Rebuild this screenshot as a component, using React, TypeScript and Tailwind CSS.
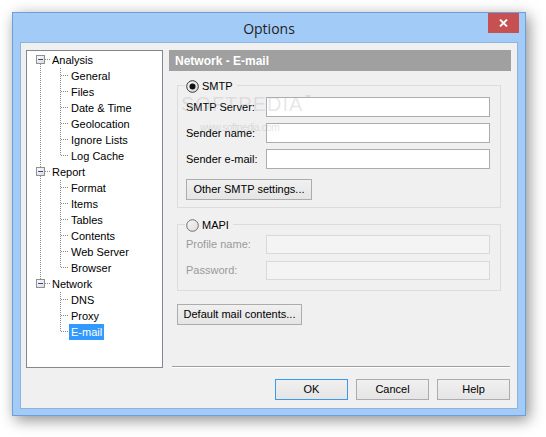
import React from "react";

type Branch = { label: string; children: string[] };

const TREE: Branch[] = [
  { label: "Analysis", children: ["General", "Files", "Date & Time", "Geolocation", "Ignore Lists", "Log Cache"] },
  { label: "Report", children: ["Format", "Items", "Tables", "Contents", "Web Server", "Browser"] },
  { label: "Network", children: ["DNS", "Proxy", "E-mail"] },
];

const DOT = { stroke: "#8a8a8a", strokeWidth: 1, strokeDasharray: "1 1", shapeRendering: "crispEdges" as const };

const ParentLines = ({ first, last }: { first: boolean; last: boolean }) => (
  <svg width="23" height="16" className="shrink-0">
    {!first && <line x1="13.5" y1="0" x2="13.5" y2="3" {...DOT} />}
    {!last && <line x1="13.5" y1="12" x2="13.5" y2="16" {...DOT} />}
    <defs>
      <linearGradient id="exp" x1="0" y1="0" x2="1" y2="1">
        <stop offset="0" stopColor="#ffffff" />
        <stop offset="1" stopColor="#d8d8d8" />
      </linearGradient>
    </defs>
    <rect x="9.5" y="3.5" width="8" height="8" fill="url(#exp)" stroke="#919191" shapeRendering="crispEdges" />
    <line x1="11" y1="7.5" x2="16" y2="7.5" stroke="#2a4f9c" strokeWidth="1" shapeRendering="crispEdges" />
    <line x1="18" y1="7.5" x2="23" y2="7.5" {...DOT} />
  </svg>
);

const ChildLines = ({ rootLine, last }: { rootLine: boolean; last: boolean }) => (
  <svg width="42" height="16" className="shrink-0">
    {rootLine && <line x1="13.5" y1="0" x2="13.5" y2="16" {...DOT} />}
    <line x1="33.5" y1="0" x2="33.5" y2={last ? 8 : 16} {...DOT} />
    <line x1="34" y1="7.5" x2="42" y2="7.5" {...DOT} />
  </svg>
);

const TreeView = () => (
  <div className="w-[137px] h-[318px] shrink-0 border border-[#828790] bg-white pt-[1px] text-[11px] leading-4 text-black">
    {TREE.map((b, bi) => {
      const lastBranch = bi === TREE.length - 1;
      return (
        <React.Fragment key={b.label}>
          <div className="flex h-4 items-center">
            <ParentLines first={bi === 0} last={lastBranch} />
            <span className="px-[2px]">{b.label}</span>
          </div>
          {b.children.map((c, ci) => {
            const selected = c === "E-mail";
            return (
              <div key={c} className="flex h-4 items-center">
                <ChildLines rootLine={!lastBranch} last={ci === b.children.length - 1} />
                <span className={selected ? "bg-[#3399ff] px-[2px] text-white" : "px-[2px]"}>{c}</span>
              </div>
            );
          })}
        </React.Fragment>
      );
    })}
  </div>
);

const Radio = ({ checked }: { checked?: boolean }) => (
  <svg width="13" height="13" className="shrink-0">
    <defs>
      <linearGradient id={checked ? "rOn" : "rOff"} x1="0" y1="0" x2="1" y2="1">
        <stop offset="0" stopColor="#f6f6f6" />
        <stop offset="1" stopColor="#dedede" />
      </linearGradient>
    </defs>
    <circle cx="6.5" cy="6.5" r="5.8" fill={`url(#${checked ? "rOn" : "rOff"})`} stroke={checked ? "#333333" : "#707070"} strokeWidth="1" />
    {checked && <circle cx="6.5" cy="6.5" r="3" fill="#111111" />}
  </svg>
);

const WinButton = ({ label, className = "", primary }: { label: string; className?: string; primary?: boolean }) => (
  <div
    className={
      "flex h-[21px] items-center justify-center border bg-linear-to-b from-[#f0f0f0] to-[#e5e5e5] text-[11px] text-black " +
      (primary ? "border-[#3c98e8] " : "border-[#acacac] ") +
      className
    }
  >
    {label}
  </div>
);

const Field = ({ label, disabled }: { label: string; disabled?: boolean }) => (
  <div className="flex items-center">
    <span className={"w-[88px] shrink-0 pl-[8px] text-[11px] " + (disabled ? "text-[#9a9a9a]" : "text-black")}>{label}</span>
    <div
      className={
        "w-[224px] " +
        (disabled ? "h-[19px] border border-[#d9d9d9] bg-[#f4f4f4]" : "h-[20px] border border-[#abadb3] bg-white")
      }
    />
  </div>
);

export default function App() {
  return (
    <div
      className="w-[546px] h-[437px] overflow-hidden bg-white pl-[12px] pt-[12px]"
      style={{ fontFamily: '"Liberation Sans", Arial, sans-serif' }}
    >
      <div className="relative flex h-[404px] w-[514px] flex-col border border-[#6f9fd8] bg-[#a3cbf7] shadow-[3px_4px_14px_rgba(0,0,0,0.45)]">
        <div
          className="flex h-[29px] shrink-0 items-center justify-center pt-[1px] text-[14px] text-[#1e1e1e]"
          style={{ fontFamily: '"Open Sans", "Noto Sans", sans-serif' }}
        >
          Options
        </div>
        <div className="absolute right-[6px] top-0 flex h-[20px] w-[31px] items-center justify-center bg-[#c75050]">
          <svg width="9" height="8" viewBox="0 0 9 8">
            <path d="M1 0.5 L8 7.5 M8 0.5 L1 7.5" stroke="#ffffff" strokeWidth="1.8" />
          </svg>
        </div>

        <div className="mx-[7px] flex h-[367px] shrink-0 border border-[#8eb3dd] bg-[#f0f0f0] pl-[5px] pt-[7px]">
          <TreeView />

          <div className="ml-[6px] flex w-[342px] flex-col">
            <div className="flex h-[21px] items-center bg-[#a0a0a0] pl-[6px] text-[12px] font-bold text-white">
              Network - E-mail
            </div>

            <div className="relative ml-[8px] mt-[14px] h-[123px] w-[324px] border border-[#dcdcdc] pt-[11px]">
              <div className="absolute left-[7px] top-[-8px] flex h-4 items-center gap-[3px] bg-[#f0f0f0] pl-[1px] pr-[4px] text-[11px] text-black">
                <Radio checked />
                <span>SMTP</span>
              </div>
              <div className="flex flex-col gap-[6px]">
                <Field label="SMTP Server:" />
                <Field label="Sender name:" />
                <Field label="Sender e-mail:" />
              </div>
              <WinButton label="Other SMTP settings..." className="ml-[8px] mt-[10px] w-[126px]" />

              {/* faint softpedia watermark laid over the form */}
              <div className="pointer-events-none absolute left-[3px] top-[8px] select-none leading-none">
                <span className="text-[20px] tracking-[1px] text-[rgba(170,170,170,0.28)]">SOFTPEDIA</span>
                <span className="ml-[1px] align-top text-[6px] text-[rgba(150,150,150,0.5)]">™</span>
              </div>
              <div className="pointer-events-none absolute left-[22px] top-[37px] select-none text-[10px] leading-none tracking-[-0.4px] text-[rgba(170,170,170,0.35)]">
                www.softpedia.com
              </div>
            </div>

            <div className="relative ml-[8px] mt-[16px] h-[67px] w-[324px] border border-[#dcdcdc] pt-[10px]">
              <div className="absolute left-[7px] top-[-8px] flex h-4 items-center gap-[3px] bg-[#f0f0f0] pl-[1px] pr-[4px] text-[11px] text-black">
                <Radio />
                <span>MAPI</span>
              </div>
              <div className="flex flex-col gap-[7px]">
                <Field label="Profile name:" disabled />
                <Field label="Password:" disabled />
              </div>
            </div>

            <WinButton label="Default mail contents..." className="ml-[8px] mt-[13px] w-[125px]" />

            <div className="ml-[3px] mt-[41px] h-[2px] w-[338px] border-b border-t border-b-white border-t-[#a0a0a0]" />

            <div className="mr-[1px] mt-[11px] flex justify-end gap-[8px]">
              <WinButton label="OK" primary className="w-[73px]" />
              <WinButton label="Cancel" className="w-[73px]" />
              <WinButton label="Help" className="w-[73px]" />
            </div>
          </div>
        </div>
      </div>
    </div>
  );
}
